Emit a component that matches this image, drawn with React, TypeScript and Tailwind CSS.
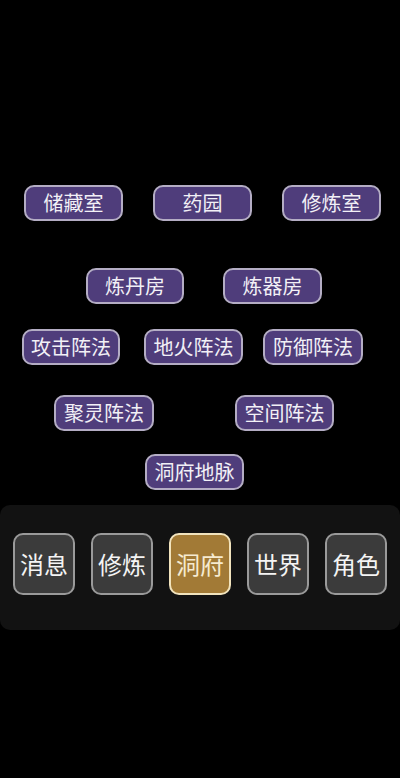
const font = { fontFamily: '"Noto Sans CJK SC", "Noto Sans", sans-serif' };

function Room({ label, w }: { label: string; w: string }) {
  return (
    <button
      className={`${w} h-[36px] shrink-0 rounded-[10px] border-2 border-[#b4adc4] bg-[#4f3d7b] text-[20px] leading-none text-[#f2f0f6] flex items-center justify-center`}
    >
      {label}
    </button>
  );
}

const tabs = ["消息", "修炼", "洞府", "世界", "角色"];

export default function App() {
  return (
    <div className="w-[400px] h-[778px] bg-black overflow-hidden" style={font}>
      {/* rooms */}
      <div className="flex pl-[24px] gap-[30px] mt-[185px]">
        <Room label="储藏室" w="w-[99px]" />
        <Room label="药园" w="w-[99px]" />
        <Room label="修炼室" w="w-[99px]" />
      </div>
      <div className="flex pl-[86px] gap-[39px] mt-[47px]">
        <Room label="炼丹房" w="w-[98px]" />
        <Room label="炼器房" w="w-[99px]" />
      </div>

      {/* arrays */}
      <div className="flex pl-[22px] mt-[25px]">
        <Room label="攻击阵法" w="w-[98px]" />
        <div className="ml-[24px]">
          <Room label="地火阵法" w="w-[99px]" />
        </div>
        <div className="ml-[20px]">
          <Room label="防御阵法" w="w-[100px]" />
        </div>
      </div>
      <div className="flex pl-[54px] gap-[81px] mt-[30px]">
        <Room label="聚灵阵法" w="w-[100px]" />
        <Room label="空间阵法" w="w-[99px]" />
      </div>
      <div className="flex pl-[145px] mt-[23px]">
        <Room label="洞府地脉" w="w-[99px]" />
      </div>

      {/* bottom nav */}
      <div className="mt-[15px] h-[125px] rounded-[10px] bg-[#121212] flex gap-[16px] pl-[13px] pt-[28px]">
        {tabs.map((t) => {
          const active = t === "洞府";
          return (
            <button
              key={t}
              className={
                active
                  ? "w-[62px] h-[62px] rounded-[10px] border-2 border-[#f1e3bd] bg-[#a27a36] text-[24px] leading-none text-[#f6ead0] flex items-center justify-center"
                  : "w-[62px] h-[62px] rounded-[10px] border-2 border-[#9a9a9a] bg-[#3b3b3b] text-[24px] leading-none text-[#f4f4f4] flex items-center justify-center"
              }
            >
              {t}
            </button>
          );
        })}
      </div>
    </div>
  );
}
